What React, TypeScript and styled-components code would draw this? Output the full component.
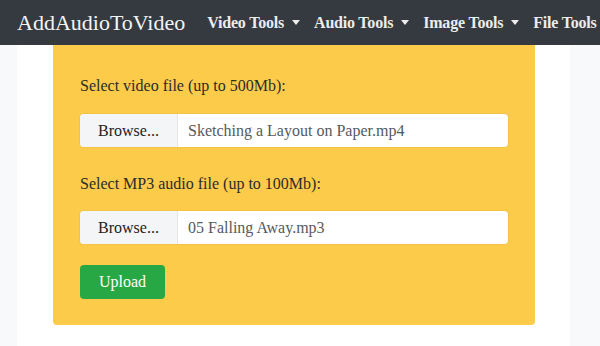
import React, { VFC } from 'react'
import styled, { createGlobalStyle } from 'styled-components'

const GlobalStyle = createGlobalStyle`
  html, body {
    margin: 0;
    padding: 0;
    background: #f8f9fa;
    font-family: 'Liberation Serif', 'DejaVu Serif', serif;
    color: #343a40;
  }
`

const Navbar = styled.nav`
  display: flex;
  align-items: center;
  height: 45px;
  padding-left: 17px;
  background: #343a40;
  white-space: nowrap;
  overflow: hidden;
`

const Brand = styled.div`
  font-size: 22px;
  color: #f4f4f4;
  margin-right: 22px;
`

const NavItem = styled.div`
  display: flex;
  align-items: center;
  gap: 8px;
  font-size: 16px;
  font-weight: bold;
  letter-spacing: -0.2px;
  color: #ececec;
  margin-right: 14px;
`

const Caret = styled.span`
  width: 0;
  height: 0;
  border-left: 4px solid transparent;
  border-right: 4px solid transparent;
  border-top: 5px solid #ececec;
`

const Page = styled.div`
  display: flex;
  height: 301px;
`

const Container = styled.main`
  width: 517px;
  margin-left: 17px;
  padding-left: 36px;
  background: #fff;
`

const Card = styled.section`
  display: flex;
  flex-direction: column;
  align-items: flex-start;
  width: 428px;
  padding: 29px 27px 26px;
  background: #fccb4a;
  border-radius: 0 0 4px 4px;
`

const Label = styled.label<{ gap: number }>`
  font-size: 16px;
  line-height: 24px;
  color: #2b2b2b;
  margin-bottom: ${({ gap }) => gap}px;
`

const FileGroup = styled.div<{ gap: number }>`
  display: flex;
  width: 100%;
  height: 33px;
  margin-bottom: ${({ gap }) => gap}px;
  border-radius: 4px;
  overflow: hidden;
  background: #fff;
  box-shadow: 0 0 0 1px rgba(0, 0, 0, 0.04);
`

const BrowseButton = styled.div`
  display: flex;
  align-items: center;
  justify-content: center;
  width: 97px;
  background: #f4f5f7;
  border-right: 1px solid #e6e6e6;
  font-size: 16px;
  color: #222;
`

const FileName = styled.div`
  display: flex;
  align-items: center;
  padding-left: 10px;
  font-size: 16px;
  color: #555a60;
`

const UploadButton = styled.button`
  width: 85px;
  height: 34px;
  border: none;
  border-radius: 4px;
  background: #28a745;
  color: #fff;
  font-family: inherit;
  font-size: 16px;
`

const App: VFC = () => (
  <>
    <GlobalStyle />
    <Navbar>
      <Brand>AddAudioToVideo</Brand>
      {['Video Tools', 'Audio Tools', 'Image Tools'].map((item) => (
        <NavItem key={item}>
          {item}
          <Caret />
        </NavItem>
      ))}
      <NavItem>File Tools</NavItem>
    </Navbar>
    <Page>
      <Container>
        <Card>
          <Label gap={16}>Select video file (up to 500Mb):</Label>
          <FileGroup gap={25}>
            <BrowseButton>Browse...</BrowseButton>
            <FileName>Sketching a Layout on Paper.mp4</FileName>
          </FileGroup>
          <Label gap={15}>Select MP3 audio file (up to 100Mb):</Label>
          <FileGroup gap={21}>
            <BrowseButton>Browse...</BrowseButton>
            <FileName>05 Falling Away.mp3</FileName>
          </FileGroup>
          <UploadButton>Upload</UploadButton>
        </Card>
      </Container>
    </Page>
  </>
)

export default App
